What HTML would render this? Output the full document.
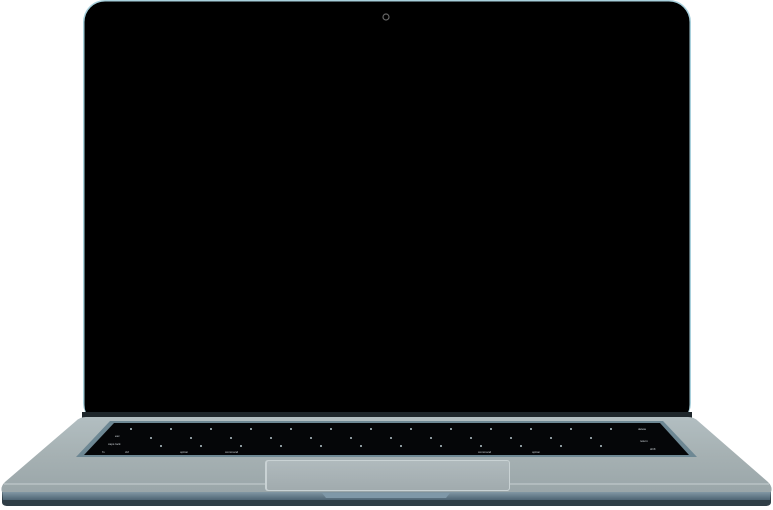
<!DOCTYPE html>
<html><head><meta charset="utf-8"><style>
html,body{margin:0;padding:0;background:#fff;width:773px;height:510px;overflow:hidden}
</style></head><body>
<svg width="773" height="510" viewBox="0 0 773 510" xmlns="http://www.w3.org/2000/svg">
<defs>
<linearGradient id="deck" x1="0" y1="0" x2="0" y2="1">
<stop offset="0" stop-color="#b2bec1"/><stop offset="0.5" stop-color="#a6b1b3"/><stop offset="1" stop-color="#9aa6a9"/>
</linearGradient>
<linearGradient id="edge" x1="0" y1="0" x2="0" y2="1">
<stop offset="0" stop-color="#8ea3b0"/><stop offset="1" stop-color="#4e6574"/>
</linearGradient>
<linearGradient id="pad" x1="0" y1="0" x2="0" y2="1">
<stop offset="0" stop-color="#b0babd"/><stop offset="1" stop-color="#a1abae"/>
</linearGradient>
</defs>
<!-- lid -->
<rect x="83" y="0" width="608" height="425" rx="22" fill="#a8d0dc"/>
<rect x="84.5" y="1.5" width="605" height="424" rx="20.5" fill="#000"/>
<circle cx="386" cy="17" r="3" fill="none" stroke="#666" stroke-width="1.2"/>
<rect x="82" y="412" width="610" height="6" fill="#1e262a"/>
<!-- bottom edge -->
<path d="M2 492 L771 492 L771 502 Q771 506 765 506 L8 506 Q2 506 2 502 Z" fill="#2f3e46"/>
<path d="M2 490 L771 490 L770 500 L3 500 Z" fill="url(#edge)"/>
<!-- deck -->
<path d="M86 417 L688 417 Q694 417 698 421 L768 482 Q773 487 771 492 L2 492 Q0 487 5 482 L76 421 Q80 417 86 417 Z" fill="url(#deck)"/>
<path d="M4 484 L769 484" stroke="#c8d0d2" stroke-width="1"/>
<!-- keyboard well -->
<path d="M110 421 L663 421 L697 457 L76 457 Z" fill="#6e8894"/>
<path d="M114 423 L660 423 L689 455 L84 455 Z" fill="#050608"/>
<g fill="#cfd6da" font-family="Liberation Sans, sans-serif" font-size="3">
<text x="115" y="437">esc</text><text x="108" y="445">caps lock</text><text x="102" y="453">fn</text>
<text x="125" y="453">ctrl</text><text x="180" y="453">option</text><text x="225" y="453">command</text>
<text x="478" y="453">command</text><text x="532" y="453">option</text>
<text x="638" y="430">delete</text><text x="640" y="442">return</text><text x="650" y="450">shift</text>
</g>
<g fill="#8a979c">
<rect x="130" y="428" width="2" height="2"/><rect x="170" y="428" width="2" height="2"/><rect x="210" y="428" width="2" height="2"/><rect x="250" y="428" width="2" height="2"/><rect x="290" y="428" width="2" height="2"/><rect x="330" y="428" width="2" height="2"/><rect x="370" y="428" width="2" height="2"/><rect x="410" y="428" width="2" height="2"/><rect x="450" y="428" width="2" height="2"/><rect x="490" y="428" width="2" height="2"/><rect x="530" y="428" width="2" height="2"/><rect x="570" y="428" width="2" height="2"/><rect x="610" y="428" width="2" height="2"/>
<rect x="150" y="437" width="2" height="2"/><rect x="190" y="437" width="2" height="2"/><rect x="230" y="437" width="2" height="2"/><rect x="270" y="437" width="2" height="2"/><rect x="310" y="437" width="2" height="2"/><rect x="350" y="437" width="2" height="2"/><rect x="390" y="437" width="2" height="2"/><rect x="430" y="437" width="2" height="2"/><rect x="470" y="437" width="2" height="2"/><rect x="510" y="437" width="2" height="2"/><rect x="550" y="437" width="2" height="2"/><rect x="590" y="437" width="2" height="2"/>
<rect x="160" y="445" width="2" height="2"/><rect x="200" y="445" width="2" height="2"/><rect x="240" y="445" width="2" height="2"/><rect x="280" y="445" width="2" height="2"/><rect x="320" y="445" width="2" height="2"/><rect x="360" y="445" width="2" height="2"/><rect x="400" y="445" width="2" height="2"/><rect x="440" y="445" width="2" height="2"/><rect x="480" y="445" width="2" height="2"/><rect x="520" y="445" width="2" height="2"/><rect x="560" y="445" width="2" height="2"/><rect x="600" y="445" width="2" height="2"/>
</g>
<!-- trackpad -->
<rect x="265" y="460" width="245" height="31" rx="3" fill="#c9d2d4"/>
<rect x="267" y="461" width="242" height="29" rx="2" fill="url(#pad)"/>
<!-- front notch -->
<path d="M322 493 L450 493 L446 498 L326 498 Z" fill="#7f98a8"/>
</svg>
</body></html>
